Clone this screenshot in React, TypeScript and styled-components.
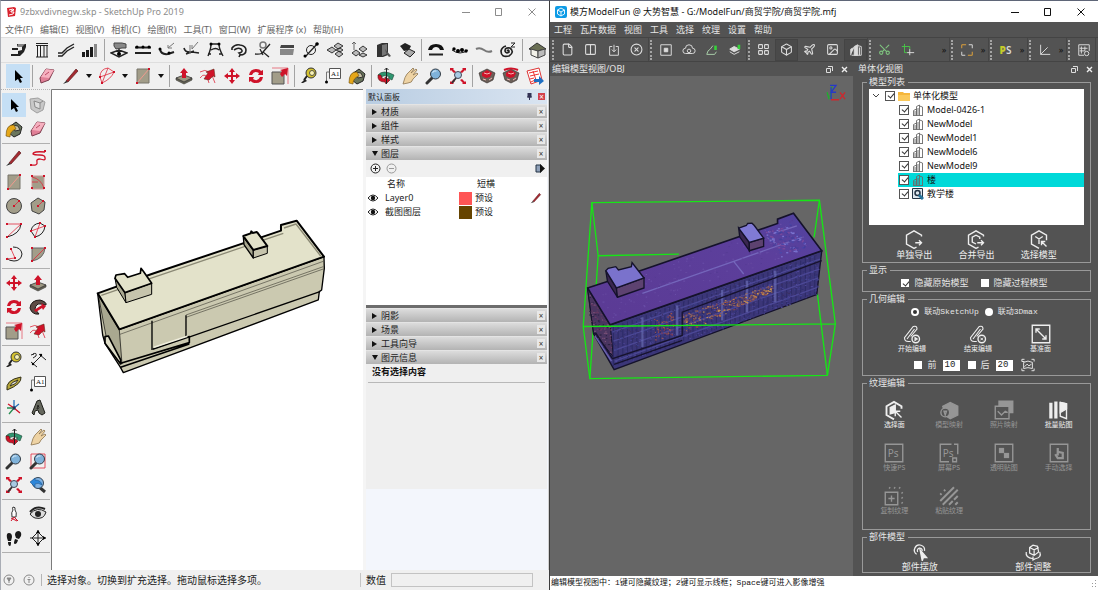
import React from "react";
import styled, { createGlobalStyle, css } from "styled-components";
import { File, Columns2, CircleX, Box, Plane, Image as Picture, Scissors, LayoutGrid } from "lucide-react";

const GlobalStyle = createGlobalStyle`
  * { box-sizing: border-box; }
  body { margin: 0; background: #535353; }
  body, button, input { font-family: "Noto Sans", "Noto Sans CJK SC", sans-serif; font-size: 9px; line-height: 12px; }
  button { border: 0; padding: 0; background: none; color: inherit; }
  svg { display: block; }
`;

/* ---------- shared ---------- */

const Desktop = styled.main`
  display: flex;
  min-height: 100vh;
`;

const Frame = styled.section<{ $dark?: boolean }>`
  flex: 1 1 0;
  min-width: 0;
  display: flex;
  flex-direction: column;
  border-top: 1px solid #5f6678;
  border-left: 1px solid ${(p) => (p.$dark ? "#3c3c3c" : "#a9adb5")};
  background: ${(p) => (p.$dark ? "#535353" : "#f0f0f0")};
  color: ${(p) => (p.$dark ? "#e6e6e6" : "#222")};
`;

const TitleBar = styled.header<{ $active?: boolean }>`
  display: flex;
  align-items: center;
  height: 21px;
  padding: 0 1px 0 5px;
  background: #fff;
  color: ${(p) => (p.$active ? "#111" : "#8c8c8c")};
`;

const Title = styled.h1`
  flex: 1;
  margin: 0 0 0 3px;
  font-size: 9px;
  font-weight: 400;
  line-height: 14px;
  white-space: nowrap;
`;

const WindowButton = styled.button`
  width: 33px;
  height: 20px;
  display: grid;
  place-items: center;
`;

const MenuBar = styled.nav<{ $dark?: boolean }>`
  display: flex;
  gap: ${(p) => (p.$dark ? 8 : 7)}px;
  align-items: center;
  height: 15px;
  padding-left: 4px;
  background: ${(p) => (p.$dark ? "#535353" : "#fff")};
  color: ${(p) => (p.$dark ? "#e6e6e6" : "#666")};
  button { white-space: nowrap; }
`;

function WindowControls() {
  const line = { fill: "none", stroke: "currentColor", strokeWidth: 1 };
  return (
    <>
      <WindowButton aria-label="最小化"><svg width="8" height="8" {...line}><path d="M0 4.5h8" /></svg></WindowButton>
      <WindowButton aria-label="最大化"><svg width="8" height="8" {...line}><path d="M.5 .5h6v7h-6z" /></svg></WindowButton>
      <WindowButton aria-label="关闭"><svg width="8" height="8" {...line}><path d="M.5 .5l7 7M7.5 .5l-7 7" /></svg></WindowButton>
    </>
  );
}

/* ---------- SketchUp icons, drawn on an 18 unit grid ---------- */

const R = "#cf1329";
const T = "#a29d89";
const thin = { fill: "none", stroke: "#222", strokeWidth: 1 };
const redLine = { fill: "none", stroke: "#e0293c", strokeWidth: 0.8 };

const dots = (...points: number[][]) =>
  points.map(([x, y]) => <rect key={`${x}-${y}`} x={x - 1} y={y - 1} width="2" height="2" fill={R} />);

const lens = (
  <>
    <path d="M7 11L2 16" stroke="#333" strokeWidth="3" strokeLinecap="round" />
    <circle cx="10.500" cy="7" r="5" fill="#7fb2da" stroke="#333b44" />
    <path d="M7.500 6q1-3 4-2" stroke="#d8ecfa" fill="none" />
  </>
);
const extents = (
  <>
    <path d="M1 1h4l-1 1 3 3-2 1-3-3-1 1zM17 1h-4l1 1-3 3 2 1 3-3 1 1zM1 17h4l-1-1 2-2-1-2-3 3-1-1zM17 17h-4l1-1-3-3 2-1 3 3 1-1z" fill={R} />
    <circle cx="9" cy="8" r="3.500" fill="#a9cbe4" stroke="#445" />
    <path d="M7 11l-4 5" stroke="#333" strokeWidth="2" />
  </>
);
const gem = (
  <>
    <path d="M1 6l8-4 8 4-2 7-6 3-6-3z" fill="#6b5f58" stroke="#2c2523" strokeWidth=".6" />
    <path d="M4 6l5-3 5 3-2 4-4 1-4-2z" fill={R} />
    <path d="M6 6l3 1 3-1M5 12l3 1M11 13l3-2" stroke="#f5b3b3" fill="none" />
  </>
);

const art: Record<string, React.ReactNode> = {
  cursor: <path d="M6 3v11l3-2 2 4 2-1-2-4h3z" fill="#000" />,
  eraser: <><path d="M2 11L8 2l8 1-5 10-8 3z" fill="#e07f96" stroke="#7c3b4c" /><path d="M8 2l8 1-5 8-8-1z" fill="#f6b0bf" /><path d="M7 8l4-3" stroke="#b94a64" /></>,
  pencil: <><path d="M4 14L14 2l2 2L6 15z" fill="#a52a31" stroke="#5f1c20" strokeWidth=".7" /><path d="M1 17l3-3 2 1z" fill="#222" /></>,
  arc: <><path d="M2 10Q2 2 10 1l6 4Q13 12 4 16z" {...redLine} /><path d="M2 10L16 5M4 16L10 1" {...redLine} />{dots([2, 10], [16, 5], [4, 16])}</>,
  rect: <><path d="M3 2h12v14H3z" fill={T} stroke="#77746a" /><path d="M3 16L15 2" stroke="#f19a8e" />{dots([3, 16], [15, 2])}</>,
  rect2: <><path d="M3 3h12v13H3z" fill={T} stroke="#c99" /><path d="M3 4q9 2 12 11M3 9h6" {...redLine} />{dots([3, 3], [15, 3], [15, 15], [3, 15])}</>,
  push: <><path d="M1 11v2l8 4 8-4v-2l-8 4z" fill="#6b6857" stroke="#333" strokeWidth=".6" /><path d="M1 11l8-3 8 3-8 4z" fill="#9c9782" stroke="#333" strokeWidth=".8" /><path d="M9 1l4 5h-2v5H7V6H5z" fill={R} /></>,
  offset: <><path d="M1 5Q11-1 16 16M1 11q6-8 9 5" {...redLine} /><path d="M5 12l4-6-2-1 8-3 1 8-2-1-4 4z" fill={R} stroke="#521" strokeWidth=".5" /></>,
  move: <path d="M9 1l3 4h-2v3h3V6l4 3-4 3v-2h-3v3h2l-3 4-3-4h2v-3H5v2L1 9l4-3v2h3V5H6z" fill={R} />,
  rotate: <path d="M2 8q1-6 7-6 4 0 5 2l2-1v5h-5l1-2q-5-3-7 2zM16 10q-1 6-7 6-4 0-5-2l-2 1v-5h5l-1 2q5 3 7-2z" fill={R} />,
  scale: <><path d="M1 5h12v12H1z" fill={T} stroke="#555" /><path d="M1 1h16v16" {...redLine} strokeWidth=".6" /><path d="M9 7l2-3-2-1 8-2-1 8-2-2-3 3z" fill={R} /></>,
  tape: <><path d="M1 16l4-4 2 2-4 2z" fill="#222" /><circle cx="11" cy="6" r="5" fill="#d4c230" stroke="#333" /><circle cx="12" cy="6" r="2.500" fill="#f8f2b6" stroke="#554" /><path d="M7 9l-3 4" stroke="#222" strokeWidth="2" /></>,
  label: <><path d="M5.500 1.500h11v10h-11z" fill="#fff" stroke="#555" /><text x="7" y="9" fontSize="7" fontFamily="Liberation Serif, serif" fill="#111">A1</text><path d="M5 5H2.500v10" {...thin} stroke="#777" /><circle cx="2.500" cy="15" r="1.500" /></>,
  paint: <><path d="M4 7l7-5 6 5-2 7-6 3-5-4z" fill="#6a765d" stroke="#222" /><path d="M7 5l6 1 2 4-5 1z" fill="#c9c4a8" stroke="#333" /><path d="M9 5Q1 4 1 16l4 1q0-6 6-8z" fill="#e5a719" stroke="#6b4b0a" strokeWidth=".6" /></>,
  orbit: <><path d="M1 8q5-6 16 0l-2 5-4-2 2-1Q6 7 4 11z" fill="#2f9670" stroke="#1b4232" strokeWidth=".6" /><path d="M1 8q-1 7 7 7l1 2 4-4-5-3v2q-4 0-4-4z" fill={R} stroke="#511" strokeWidth=".6" /><path d="M9.500 1v16M7.500 3l2-2 2 2" {...thin} /></>,
  hand: <path d="M2 17q2-8 4-10l6-6 1 1-3 4 5-4 1 1-4 5 4-2 1 1-5 5q-1 4-5 4z" fill="#eed3a4" stroke="#8d7550" strokeWidth=".8" />,
  zoom: lens,
  extents,
  zoomRed: <><path d="M2 2h14v14H2z" {...redLine} />{lens}</>,
  gem,
  gem2: <>{gem}<path d="M2 3q7-3 14 0" fill="none" stroke={R} strokeWidth="2" /></>,
  redPages: <><path d="M1 4l12-3 3 12-11 4z" fill="#fff" stroke="#d33" /><path d="M3 6l9-2M4 9l9-2M4 12l4-1M5 15l4-2M7 4l3 9" stroke="#e33" /><path d="M8 12h5v-3l5 5-5 4v-3H8z" fill="#1e6fc2" /></>,
  component: <><path d="M1 3l8-1 7 4-2 8-6 3-6-4z" fill="#c8c8c8" stroke="#a0a0a0" /><path d="M5 5l6 2v6l-5-2zM11 7l3-2" fill="#ddd" stroke="#8a8a8a" /></>,
  squiggle: <><path d="M2 16q7 1 6-3-1-3 3-3 6 2 5-1 0-3-5-3-6 0-7-1 0-3 12-2" fill="none" stroke={R} strokeWidth="1.300" />{dots([2, 16], [16, 2])}</>,
  circle: <><circle cx="9" cy="9" r="7.500" fill={T} stroke="#444" /><path d="M9 9l5-5" {...redLine} />{dots([9, 9], [14, 4])}</>,
  polygon: <><path d="M9 1l7 4-1 8-5 4-7-3-1-8z" fill={T} stroke="#444" /><path d="M9 9l5-5" {...redLine} />{dots([9, 9], [14, 4])}</>,
  arc2: <><path d="M16 3q-1 10-14 13" {...thin} /><path d="M2 3h14L2 16" {...redLine} />{dots([2, 3], [16, 3], [2, 16])}</>,
  pie: <><path d="M2 10Q3 3 11 2l5 3q-1 9-10 11z" {...thin} /><path d="M2 10l14-5M6 16l5-14" {...redLine} />{dots([2, 10], [11, 2], [16, 5], [6, 16])}</>,
  arc3: <><path d="M8 2q8 0 9 7-1 7-8 7-5 0-7-3" {...thin} /><path d="M6 4l4 9-8 1" {...redLine} />{dots([6, 4], [10, 13], [2, 14])}</>,
  wedge: <><path d="M3 3h13q-1 11-13 13z" fill={T} stroke="#666" /><path d="M3 16L16 3" {...redLine} />{dots([3, 3], [16, 3], [3, 16])}</>,
  follow: <><path d="M1 10q1-8 10-8 7 2 6 5l-5-1Q7 5 6 11l4 5q-7 1-9-6z" fill="#5d4b45" stroke="#1e1715" /><path d="M5 12l8-5-1-2 5 3-3 4-1-2-6 4z" fill={R} /></>,
  dimension: <><path d="M2 11l6 5M10 3l7 6M4 13l9-9" {...thin} /><path d="M4 3q4-2 3 2l-3 2M2 4l3-1" {...thin} /><circle cx="4" cy="13" r="1.200" /><circle cx="12" cy="4" r="1.200" /></>,
  protractor: <path d="M2 15Q0 5 16 2q1 7-14 13zM5 11q1-4 8-6-1 4-8 6z" fill="#b8a83b" fillRule="evenodd" stroke="#33301a" />,
  axes: <><path d="M9 9V1M9 9l5-4" stroke="#2470b8" strokeWidth="1.300" /><path d="M9 9l6 5M9 9L3 5" stroke={R} strokeWidth="1.300" /><path d="M9 9l-5 6M2 9h5" stroke="#278d52" strokeWidth="1.300" /><circle cx="9" cy="9" r="1.800" fill="#235" /></>,
  text3d: <path d="M3 14L8 2l3-1 5 13-3 2-3-2-1-3-3 1-1 4zM8 10l2-1-1-3z" fill="#66685e" stroke="#1d1e19" fillRule="evenodd" />,
  zoomPrev: <><path d="M9 10l7 6" stroke="#333" strokeWidth="3" /><circle cx="9" cy="7" r="5.500" fill="#7fb2e4" stroke="#345" /><path d="M1 6l5-4v2q6 0 7 5-4-3-7-1v3z" fill="#2d86d9" stroke="#12497f" strokeWidth=".5" /></>,
  camera: <><path d="M8 2q3 0 2 3 2 2 1 7H7Q6 7 8 5 7 3 8 2z" fill="#fff" stroke="#333" /><path d="M6 16l3-4 4 4M6 13l6 3" stroke={R} fill="none" /></>,
  eye: <><path d="M1 9q7-8 16-2-2 8-11 6-3-1-5-4z" fill="#ddd" stroke="#222" /><circle cx="9" cy="9" r="3" fill="#222" /><path d="M1 7q6-7 15-3" {...thin} strokeWidth="2" /></>,
  walk: <path d="M2 9q-1-5 2-5t3 4l-1 4H3zM3 13h3q0 4-1 4-2 0-2-4zM10 6q0-4 4-4 3 1 2 5l-2 3-3-1zM10 10l3 1q-1 4-3 4t0-5z" fill="#1a1a1a" />,
  section: <><path d="M9 1v16M1 9h16M3 9l6-6 6 6-6 6z" {...thin} /><path d="M9 1l2 3H7zM9 17l2-3H7zM17 9l-3 2V7z" /></>,
  // extension toolbar
  stairs: <><path d="M2 13h7v-3l4-1V5H8V3h9v3l-2 5-4 4H2zM3 7h6v2H3z" fill="#222" /><path d="M9 3h7l-3 3H8z" fill="#888" /></>,
  columns: <path d="M3 2.500h12M3 4.500h12M4.500 5v11M7.500 5v11M11 5v11M14 5v11M3 16h12" {...thin} />,
  rails: <path d="M1 12h4l5-5 7-4M1 15h4l5-5 7-4" {...thin} strokeWidth="1.400" />,
  bars: <><path d="M1 11h3v5H1zM5 9h3v7H5zM9 6h3v10H9z" fill="#1b1b1b" /><path d="M13 3h3v13h-3z" fill="#888" /></>,
  stamp: <><path d="M4 2h8l4 1v4h-4l-6 1-2-3z" fill="#888" stroke="#444" /><path d="M9 8v4M1 12l8-3 8 3-8 4z" {...thin} strokeWidth="1.500" /><circle cx="9" cy="13" r="2" /></>,
  beams: <><path d="M1 6.500h16M1 12h16" {...thin} strokeWidth="2" /><circle cx="3" cy="6" r="1.500" /><circle cx="9" cy="6" r="1.500" /><circle cx="15" cy="6" r="1.500" /></>,
  sweep: <><path d="M2 8q1 6 8 5l6-2" {...thin} strokeWidth="2" /><path d="M16 2l-6 5v-3M10 7h4" stroke="#777" fill="none" /><circle cx="2" cy="8" r="1.500" /><circle cx="11" cy="12" r="1.500" /></>,
  sweep2: <><path d="M2 7q1 5 8 4l7 1M4 13l8-3" {...thin} strokeWidth="1.600" /><path d="M16 1l-6 7V4M8 4v9" stroke="#777" fill="none" /></>,
  trapezoid: <><path d="M2 15Q5 8 5 3h8q0 5 4 12M5 9q5-3 8 0M2 13h3M13 13h3" {...thin} strokeWidth="1.400" /><circle cx="5" cy="3" r="1.500" /><circle cx="13" cy="3" r="1.500" /></>,
  hook: <path d="M2 9V7q3-4 8-3 6 1 6 5 0 5-6 5l-1 2M4 9q4-3 7-1 3 3-2 4l2 2" {...thin} strokeWidth="1.600" />,
  knot: <><circle cx="9" cy="4" r="3" fill="none" stroke="#777" strokeWidth="1.500" /><path d="M1 13q7 1 9-3M16 3L9 11l6 5M6 8l3 6" {...thin} strokeWidth="1.300" /></>,
  slab: <><path d="M3 4h13v3H2z" fill="#444" /><path d="M2 8h14l-1 6H2z" fill="#888" /></>,
  pivot: <><path d="M3 16L16 2" {...thin} strokeWidth="1.300" /><circle cx="9" cy="9" r="4.500" {...thin} /><circle cx="15" cy="3" r="1.800" /><circle cx="3" cy="15" r="1.500" /></>,
  tiles: <path d="M1 9l5-3 4 3-4 3zM8 5l4-3 5 3-5 3zM9 13l4-3 4 3-4 3zM10 9l4-2 3 2-3 2z" fill="#bbb" stroke="#222" strokeWidth=".9" />,
  tilesUp: <><path d="M2 12l4-3 4 3-4 3zM9 8l4-3 4 3-4 3zM9 14l4-2 4 2-4 2z" fill="#bbb" stroke="#222" strokeWidth=".9" /><path d="M4 9V1M2 3l2-2 2 2" {...thin} stroke="#666" /></>,
  door: <><path d="M3 4l5-2h6v12l-5 2H3z" fill="#333" /><path d="M8 4l5-1v10l-5 2z" fill="#777" /><path d="M11 8l6 7-2 1-3-4" fill="#555" /></>,
  layers: <><path d="M2 5l5-3 6 3-2 4-5 1z" fill="#222" /><path d="M6 12l5-4 6 3-5 5z" fill="#aaa" stroke="#222" /></>,
  arch: <><path d="M1 9Q2 3 9 3t8 6h-4q-1-3-4-3T5 9z" fill="#111" /><path d="M2 13.500h14" {...thin} strokeWidth="2" /></>,
  beads: <><path d="M1 9q8 6 16 0" {...thin} /><circle cx="3" cy="8" r="1.700" /><circle cx="7" cy="10" r="2" /><circle cx="11" cy="9" r="2" /><circle cx="15" cy="10" r="1.700" /></>,
  wave: <path d="M1 8q4-2 8 1t8 1" fill="none" stroke="#777" strokeWidth="2" />,
  spiral: <><path d="M8 10q2-2 2 1-3 2-4-1 0-4 5-3 5 4-1 8-8 2-8-5 1-4 5-5" {...thin} strokeWidth="1.700" /><path d="M12 2h4l-4 4h4" {...thin} /></>,
  house: <><path d="M1 8l8-6 9 6-9 2z" fill="#6b7055" stroke="#333" /><path d="M3 8v6l7 3v-7z" fill="#f2f1e9" stroke="#444" /><path d="M10 10l7-2v6l-7 3z" fill="#bbb" stroke="#444" /></>,
};

const Art = ({ name }: { name: string }) => (
  <svg width="18" height="18" viewBox="0 0 18 18" aria-hidden="true">{art[name]}</svg>
);

/* ---------- SketchUp window ---------- */

const ToolBar = styled.div<{ $height: number }>`
  display: flex;
  align-items: center;
  height: ${(p) => p.$height}px;
  padding-left: 5px;
  overflow: hidden;
  border-top: 1px solid #dedede;
`;

const ToolButton = styled.button<{ $active?: boolean }>`
  flex: none;
  width: 24px;
  height: 24px;
  display: grid;
  place-items: center;
  background: ${(p) => (p.$active ? "#c5dff5" : "none")};
`;

const DropArrow = styled.button`
  flex: none;
  width: 12px;
  height: 24px;
  display: grid;
  place-items: center;
  &::before { content: ""; border: 3px solid transparent; border-top: 4px solid #111; border-bottom: 0; }
`;

const Divider = styled.span`
  flex: none;
  width: 1px;
  height: 22px;
  margin: 0 2px;
  background: #a3a3a3;
`;

const SketchBody = styled.div`
  flex: 1;
  display: flex;
  min-height: 0;
`;

const Palette = styled.div`
  flex: none;
  width: 51px;
  padding: 3px 1px 0;
  border-top: 1px dotted #b5b5b5;
  border-right: 1px solid #7b7b7b;
`;

const PaletteGroup = styled.div`
  display: grid;
  grid-template-columns: 24px 24px;
  padding-bottom: 2px;
  margin-bottom: 2px;
  border-bottom: 1px solid #b0b0b0;
`;

const Canvas = styled.div`
  flex: 1;
  min-width: 0;
  background: #fff;
  border-top: 1px solid #7b7b7b;
  svg { width: 100%; height: 100%; }
`;

const Tray = styled.aside`
  flex: 0 0 186px;
  display: flex;
  flex-direction: column;
  padding-right: 1px;
  border-left: 3px solid #f5f5f5;
  border-right: 1px solid #d0d0d0;
  background: #f3f6fc;
`;

const TrayTitle = styled.h2`
  display: flex;
  align-items: center;
  gap: 6px;
  height: 15px;
  margin: 0;
  padding: 0 2px;
  background: linear-gradient(90deg, #b9cde2, #d9e4f1);
  font-size: 8px;
  font-weight: 400;
  span { flex: 1; }
`;

const TrayClose = styled.button`
  width: 7px;
  height: 7px;
  background: #d3414c;
  color: #fff;
  font-size: 8px;
  line-height: 7px;
`;

const SectionRow = styled.div`
  display: flex;
  align-items: center;
  height: 14px;
  padding: 0 2px 0 6px;
  background: linear-gradient(#dcdcdc, #b3b3b3);
  border-top: 1px solid #e4e4e4;
`;

const SectionToggle = styled.button<{ $open?: boolean }>`
  flex: 1;
  display: flex;
  align-items: center;
  gap: 3px;
  text-align: left;
  &::before {
    content: "";
    margin-right: ${(p) => (p.$open ? 0 : 1)}px;
    border: 3px solid transparent;
    ${(p) => (p.$open
    ? css`border-top: 5px solid #111; border-bottom: 0;`
    : css`border-left: 5px solid #111; border-right: 0;`)}
  }
`;

const SectionClose = styled.button`
  width: 8px;
  height: 9px;
  background: #e8e8e8;
  color: #333;
  font-size: 8px;
  line-height: 8px;
`;

const LayerActions = styled.div`
  display: flex;
  align-items: center;
  gap: 5px;
  height: 17px;
  padding: 0 1px 0 4px;
  background: #f0f0f0;
  button:last-child { margin-left: auto; }
`;

const LayerPane = styled.div`
  height: 131px;
  background: #fff;
  border-bottom: 3px solid #6d6d6d;
`;

const LayerTable = styled.table`
  width: 100%;
  table-layout: fixed;
  border-collapse: collapse;
  tr { height: 14px; }
  th, td { padding: 0; font-weight: 400; text-align: left; line-height: 12px; white-space: nowrap; }
  th { padding-left: 2px; }
  td:first-child { padding-left: 2px; }
`;

const Swatch = styled.span<{ $color: string }>`
  display: block;
  width: 13px;
  height: 13px;
  background: ${(p) => p.$color};
`;

const EntityInfo = styled.div`
  height: 125px;
  padding: 2px 2px;
  background: #efefef;
  p { margin: 0; padding: 0 4px 4px; border-bottom: 1px solid #b8b8b8; font-weight: 700; color: #111; }
`;

const StatusBar = styled.footer`
  display: flex;
  align-items: center;
  height: 21px;
  padding: 0 2px 0 2px;
  font-size: 10px;
  border-bottom: 1px solid #b9b9b9;
  svg { margin-right: 8px; flex: none; }
  p { flex: 1; margin: 0 0 0 -2px; padding-left: 5px; border-left: 1px solid #b5b5b5; white-space: nowrap; }
  label { display: flex; align-items: center; gap: 5px; padding-left: 5px; border-left: 1px solid #c5c5c5; }
`;

const MeasureInput = styled.input`
  width: 142px;
  height: 14px;
  margin-right: 14px;
  border: 1px solid #c3c3c3;
  background: #f0f0f0;
`;

const extensionTools = [
  ["stairs", "columns", "rails", "bars"],
  ["stamp", "beams", "sweep", "sweep2", "trapezoid", "hook", "knot", "slab", "pivot", "tiles", "tilesUp", "door", "layers"],
  ["arch", "beads", "wave", "spiral"],
  ["house"],
];
const standardTools = [
  ["push", "offset", "move", "rotate", "scale"],
  ["tape", "label", "paint"],
  ["orbit", "hand", "zoom", "extents"],
  ["gem", "gem2", "redPages"],
];
const paletteTools = [
  ["cursor", "component", "paint", "eraser"],
  ["pencil", "squiggle", "rect", "rect2", "circle", "polygon", "arc2", "pie", "arc3", "wedge"],
  ["move", "push", "rotate", "follow", "scale", "offset"],
  ["tape", "dimension", "protractor", "label", "axes", "text3d"],
  ["orbit", "hand", "zoom", "zoomRed", "extents", "zoomPrev"],
  ["camera", "eye", "walk", "section"],
];

const Tools = ({ names }: { names: string[] }) => (
  <>{names.map((n) => <ToolButton key={n} aria-label={n}><Art name={n} /></ToolButton>)}</>
);

const Section = ({ title, open }: { title: string; open?: boolean }) => (
  <SectionRow>
    <SectionToggle $open={open} aria-expanded={!!open}>{title}</SectionToggle>
    <SectionClose aria-label={`关闭${title}`}>×</SectionClose>
  </SectionRow>
);

const EyeMark = () => (
  <svg width="10" height="8" viewBox="0 0 10 8"><path d="M0 4q5-6 10 0-5 6-10 0z" fill="#fff" stroke="#222" /><circle cx="5" cy="4" r="2.200" fill="#111" /></svg>
);

function MassingModel() {
  return (
    <svg viewBox="52 90 311 480" role="img" aria-label="建筑模型">
      <g transform="translate(80 200) scale(.3333)" stroke="#000" strokeLinejoin="round">
        <path d="M53 280L118 388 732 170 733 205 725 270 718 275 715 300 130 518 120 500 75 430 68 405z" fill="#cbc9b0" strokeWidth="4" />
        <path d="M55 285L118 390 126 492 80 418z" fill="#a9a890" strokeWidth="2" />
        <path d="M53 280L215 222 603 92V75L650 62 732 170 118 388z" fill="#e3e2ca" strokeWidth="6" />
        <path d="M64 286L216 234 610 100 M612 84L648 72 722 168" fill="none" stroke="#8b8975" strokeWidth="4" />
        <path d="M120 403L730 184M318 345L730 200M318 352L730 207" fill="none" stroke="#4a493e" strokeWidth="2" />
        <path d="M318 346v68M216 362v88" fill="none" strokeWidth="4" />
        <path d="M325 412L720 275" fill="none" strokeWidth="4" />
        <path d="M122 490L328 428V410L218 448M122 502L328 432" fill="none" strokeWidth="5" />
        <path d="M222 442L322 409" stroke="#efeedd" strokeWidth="5" />
        <path d="M75 410L85 408 122 480V492L75 430z" fill="#deddc8" strokeWidth="5" />
        <path d="M105 235L135 278 138 308 110 262z" fill="#a9a890" strokeWidth="3" />
        <path d="M135 278L215 250V283L138 308z" fill="#c6c4ac" strokeWidth="3" />
        <path d="M105 235L108 225 134 221 143 232 181 220 183 205 190 214 215 250 135 278z" fill="#e3e2ca" strokeWidth="5" />
        <path d="M490 110L520 150V174L492 134z" fill="#a9a890" strokeWidth="4" />
        <path d="M520 150L562 138V160L520 174z" fill="#c6c4ac" strokeWidth="3" />
        <path d="M490 108L512 100 514 94 518 99 530 96 534 100 562 138 520 150z" fill="#e3e2ca" strokeWidth="6" />
      </g>
    </svg>
  );
}

function SketchUpWindow() {
  return (
    <Frame>
      <TitleBar>
        <svg width="11" height="11" viewBox="0 0 11 11"><path d="M1 2l7-1 2 1-1 8-7 1z" fill="#d9232e" /><path d="M3 4l4-1 1 1-3 1v1l3 0-1 2-4 1" stroke="#fff" fill="none" /></svg>
        <Title>9zbxvdivnegw.skp - SketchUp Pro 2019</Title>
        <WindowControls />
      </TitleBar>
      <MenuBar>
        {["文件(F)", "编辑(E)", "视图(V)", "相机(C)", "绘图(R)", "工具(T)", "窗口(W)", "扩展程序 (x)", "帮助(H)"].map((m) => <button key={m}>{m}</button>)}
      </MenuBar>
      <ToolBar $height={25}>
        {extensionTools.map((group, i) => (
          <React.Fragment key={i}>{i > 0 && <Divider />}<Tools names={group} /></React.Fragment>
        ))}
      </ToolBar>
      <ToolBar $height={27}>
        <ToolButton $active aria-label="选择"><Art name="cursor" /></ToolButton>
        <Divider />
        <ToolButton aria-label="擦除"><Art name="eraser" /></ToolButton>
        {["pencil", "arc", "rect"].map((n) => (
          <React.Fragment key={n}><Tools names={[n]} /><DropArrow aria-label={`${n} 更多`} /></React.Fragment>
        ))}
        {standardTools.map((group, i) => (
          <React.Fragment key={i}><Divider /><Tools names={group} /></React.Fragment>
        ))}
      </ToolBar>
      <SketchBody>
        <Palette>
          {paletteTools.map((group, i) => (
            <PaletteGroup key={i}>
              {group.map((n) => <ToolButton key={n} $active={n === "cursor"} aria-label={n}><Art name={n} /></ToolButton>)}
            </PaletteGroup>
          ))}
        </Palette>
        <Canvas><MassingModel /></Canvas>
        <Tray>
          <TrayTitle>
            <span>默认面板</span>
            <svg width="5" height="7"><path d="M1 0h3v4H1zM0 4h5M2.500 4v3" fill="#335" stroke="#335" /></svg>
            <TrayClose aria-label="关闭面板">×</TrayClose>
          </TrayTitle>
          <Section title="材质" />
          <Section title="组件" />
          <Section title="样式" />
          <Section title="图层" open />
          <LayerActions>
            <button aria-label="添加图层"><svg width="11" height="11" {...thin}><circle cx="5.500" cy="5.500" r="4.500" /><path d="M3 5.500h5M5.500 3v5" /></svg></button>
            <button aria-label="删除图层"><svg width="11" height="11" {...thin} stroke="#999"><circle cx="5.500" cy="5.500" r="4.500" /><path d="M3 5.500h5" /></svg></button>
            <button aria-label="详细信息"><svg width="11" height="11"><path d="M1 2h5v7H1z" fill="#8fa0b8" stroke="#234" /><path d="M5 1l5 4.500L5 10z" fill="#111" /></svg></button>
          </LayerActions>
          <LayerPane>
            <LayerTable>
              <colgroup><col width="19" /><col /><col width="16" /><col width="55" /><col width="17" /></colgroup>
              <thead><tr><th /><th>名称</th><th /><th>短横</th><th /></tr></thead>
              <tbody>
                <tr><td><EyeMark /></td><td>Layer0</td><td><Swatch $color="#ff5555" /></td><td>预设</td><td><svg width="12" height="12" viewBox="0 0 18 18">{art.pencil}</svg></td></tr>
                <tr><td><EyeMark /></td><td>截图图层</td><td><Swatch $color="#664400" /></td><td>预设</td><td /></tr>
              </tbody>
            </LayerTable>
          </LayerPane>
          <Section title="阴影" />
          <Section title="场景" />
          <Section title="工具向导" />
          <Section title="图元信息" open />
          <EntityInfo><p>没有选择内容</p></EntityInfo>
        </Tray>
      </SketchBody>
      <StatusBar>
        <svg width="12" height="12" {...thin} stroke="#888"><circle cx="6" cy="6" r="5" /><path d="M6 9V5M4 4h4l-2 3z" fill="#888" /></svg>
        <svg width="12" height="12" {...thin} stroke="#888"><circle cx="6" cy="6" r="5" /><path d="M6 9V5M6 3v1M4.500 5.500h3" /></svg>
        <p>选择对象。切换到扩充选择。拖动鼠标选择多项。</p>
        <label>数值<MeasureInput /></label>
      </StatusBar>
    </Frame>
  );
}

/* ---------- ModelFun window ---------- */

const RibbonBar = styled.div`
  display: flex;
  height: 25px;
  padding: 0 2px 0 1px;
  border-top: 1px solid #444;
  border-bottom: 1px solid #444;
`;

const RibbonGroup = styled.div<{ $grow?: boolean }>`
  display: flex;
  align-items: center;
  flex: ${(p) => (p.$grow ? "1" : "none")};
  border-right: 1px solid #464646;
  &::before {
    content: "";
    height: 20px;
    margin: 0 2px 0 1px;
    border-left: 2px dotted #a5a5a5;
  }
`;

const RibbonButton = styled.button<{ $boxed?: boolean }>`
  width: 23px;
  height: 22px;
  display: grid;
  place-items: center;
  background: ${(p) => (p.$boxed ? "#4a4a4a" : "none")};
  outline: ${(p) => (p.$boxed ? "1px solid #444" : "0")};
  outline-offset: -1px;
  color: #dcdcdc;
`;

const More = styled.button`
  width: 10px;
  margin-left: auto;
  color: #111;
  font-size: 9px;
`;

const PhotoshopMark = styled.span`
  color: #d9d9d9;
  font-size: 10px;
  font-weight: 600;
  b { color: #c5cc2b; }
`;

const FunBody = styled.div`
  flex: 1;
  display: flex;
  min-height: 0;
`;

const Dock = styled.div<{ $side?: boolean }>`
  flex: ${(p) => (p.$side ? "0 0 245px" : "1")};
  min-width: 0;
  display: flex;
  flex-direction: column;
`;

const DockTitle = styled.h2<{ $side?: boolean }>`
  display: flex;
  align-items: center;
  gap: 8px;
  height: 14px;
  margin: 0;
  padding: ${(p) => (p.$side ? "0 5px" : "0 5px 0 2px")};
  font-size: 9px;
  font-weight: 400;
  span { flex: 1; }
`;

const Viewport = styled.div`
  flex: 1;
  background: #666;
  svg { width: 100%; height: 100%; }
`;

const SidePanel = styled.div`
  padding: 0 7px 0 9px;
`;

const Group = styled.fieldset<{ $height: number }>`
  min-width: 0;
  min-height: ${(p) => p.$height}px;
  margin: 0 0 1px;
  padding: 0 6px;
  border: 1px solid #999;
  legend { padding: 0 3px 0 2px; margin-left: -2px; line-height: 12px; }
`;

const Tree = styled.ul`
  height: 136px;
  margin: 1px 0 4px;
  padding: 0;
  list-style: none;
  background: #fff;
  color: #111;
`;

const TreeItem = styled.li<{ $level: number; $selected?: boolean }>`
  height: 14px;
  margin-left: ${(p) => (p.$level ? 29 : 0)}px;
  padding-left: ${(p) => (p.$level ? 1 : 3)}px;
  display: flex;
  align-items: center;
  background: ${(p) => (p.$selected ? "#00d9d9" : "none")};
  label { display: flex; align-items: center; gap: 3px; white-space: nowrap; }
`;

const Tick = styled.input<{ $tree?: boolean }>`
  appearance: none;
  flex: none;
  display: block;
  width: ${(p) => (p.$tree ? 10 : 8)}px;
  height: ${(p) => (p.$tree ? 10 : 8)}px;
  margin: 0;
  background: #fff;
  border: ${(p) => (p.$tree ? "1px solid #555" : "0")};
  &:checked::after {
    content: "";
    display: block;
    width: 3px;
    height: 5px;
    margin: ${(p) => (p.$tree ? "0 0 0 3px" : "1px 0 0 3px")};
    border: solid #333;
    border-width: 0 1px 1px 0;
    transform: rotate(40deg);
  }
`;

const Dot = styled.input`
  appearance: none;
  width: 8px;
  height: 8px;
  margin: 0;
  border-radius: 50%;
  background: #fff;
  &:checked { background: #333; border: 2px solid #fff; }
`;

const Row = styled.div<{ $height: number; $gap: number; $mono?: boolean }>`
  display: flex;
  justify-content: center;
  align-items: center;
  gap: ${(p) => p.$gap}px;
  height: ${(p) => p.$height}px;
  padding-right: 4px;
  label { display: flex; align-items: center; gap: 5px; white-space: nowrap; }
  ${(p) => p.$mono && css`
    font-family: "Liberation Mono", "Noto Sans CJK SC", monospace;
    font-size: 8px;
  `}
`;

const ActionGrid = styled.div<{ $columns: number; $rowHeight: number; $inset: number; $top?: number }>`
  display: grid;
  grid-template-columns: repeat(${(p) => p.$columns}, 1fr);
  grid-auto-rows: ${(p) => p.$rowHeight}px;
  margin: ${(p) => p.$top ?? 0}px ${(p) => p.$inset}px 0;
`;

const Action = styled.button<{ $small?: boolean }>`
  display: flex;
  flex-direction: column;
  align-items: center;
  justify-content: flex-start;
  color: #eee;
  font-size: ${(p) => (p.$small ? 7 : 9)}px;
  line-height: ${(p) => (p.$small ? 9 : 11)}px;
  white-space: nowrap;
  &:disabled { color: #969696; }
`;

const NumberBox = styled.input`
  width: 17px;
  height: 11px;
  margin: 0 4px 0 2px;
  padding: 0 2px;
  border: 0;
  background: #fff;
  color: #222;
  font-family: "Liberation Mono", monospace;
  font-size: 9px;
`;

const Message = styled.footer`
  display: flex;
  align-items: center;
  justify-content: space-between;
  height: 15px;
  padding: 0 1px 0 1px;
  background: #fff;
  color: #111;
  border-bottom: 1px solid #8b8b8b;
  font-family: "Liberation Mono", "Noto Sans CJK SC", monospace;
  font-size: 8px;
`;

const pale: Record<string, React.ReactNode> = {
  importBox: <path d="M6 4H3v10h10V4h-3M8 2v8M5.500 7.500L8 10l2.500-2.500" />,
  stop: <><path d="M2 2h12v12H2z" /><path d="M6 6h4v4H6z" fill="currentColor" /></>,
  cloud: <><path d="M4 12a3 3 0 010-6 4 4 0 018 0 3 3 0 010 6z" /><circle cx="8" cy="9" r="2" /></>,
  treeUp: <><path d="M2 13q1-5 4-6l3-4M2 13h9l2-3" stroke="#a9cfa9" /><path d="M12 8V3" stroke="#36d13a" strokeWidth="3" /></>,
  layersUp: <><path d="M2 7l5-3 6 3-6 3z" fill="currentColor" /><path d="M2 10l5 3 6-3" /><path d="M12.500 7V2" stroke="#36d13a" strokeWidth="3" /></>,
  buildings: <><path d="M6 14V4l4-2v12zM2 14V7l4-2" fill="currentColor" stroke="currentColor" /><path d="M10 3l4 1v10H3M12 5v9" /></>,
  crop: <><path d="M1 4h9v3M4 1v10h3" stroke="#48c348" /><path d="M10 7v7M7 11h8" /></>,
  frame: <><path d="M2 6V2h5M14 10v4H9" stroke="#e2a33a" /><path d="M10 2h4v4M2 10v4h4" /></>,
  axes2: <path d="M3 2v11h11M3 13l8-8" />,
  gridEye: <><path d="M2 2h12v7M2 2v12h6M5 4v8M9 4v5M3 6h9M3 9h6" /><circle cx="11" cy="12" r="2.500" /></>,
  hexOut: <><path d="M14 6V5L8 1.500 2 5v7l6 3.500 2-1" /><path d="M9 11h5M12 9l2 2-2 2" /></>,
  hexMerge: <><path d="M14 6V5L8 1.500 2 5v7l6 3.500 2-1" /><path d="M11 8V6.500L8 5 5 6.500v4L8 12M9 11h5M12 9l2 2-2 2" /></>,
  hexSelect: <><path d="M14 9V5L8 1.500 2 5v7l6 3.500" /><path d="M5 6l3 2 3-2M8 8v4M10 10l4 4M10 13v-3h3" /></>,
  penPlay: <><path d="M7 14H5q-3 0-3-3L9 2q3-1 3 2l-5 6M4 12l6-8" strokeWidth=".9" /><circle cx="11" cy="12" r="3" /><path d="M10.500 11v2l1.500-1z" /></>,
  penStop: <><path d="M7 14H5q-3 0-3-3L9 2q3-1 3 2l-5 6M4 12l6-8" strokeWidth=".9" /><circle cx="11" cy="12" r="3" /><path d="M10 11l2 2M12 11l-2 2" strokeWidth=".8" /></>,
  plane: <><path d="M1 1h14v14H1z" /><path d="M4 4l8 8M4 7V4h3M12 9v3H9" /></>,
  mountain: <path d="M4 4H1V1.500h3M12 1.500h3V4M1 12v2.500h3M12 14.500h3V12M3 5q5-3 10 0v7q-5-2-10 0zM4 10l3-3 2 2 3-2" />,
  face: <><path d="M14 7V5L8 1.500 2 5v7l6 3.500" strokeWidth="1.500" /><path d="M5 6l4-2v6l-4 1z" fill="currentColor" /><path d="M9 9l5 5M9 13V9h4" /></>,
  cubeMap: <><path d="M3 5l6-3 6 3v7l-6 3-3-2z" fill="currentColor" /><circle cx="5" cy="10" r="3.500" fill="#535353" /><path d="M4 9h2l-1 3z" /></>,
  photoMap: <><path d="M4 1h11v9H4z" fill="currentColor" /><path d="M1 5h11v10H1z" fill="#535353" /><path d="M3 9l3 3 3-3 2 1" /></>,
  batch: <><path d="M1 3h1v11H1zM5 2h1v12H5z" fill="currentColor" strokeWidth="1.600" /><path d="M9 2l5 1v12l-5-2z" /><path d="M9 2l5 1v4l-5 3z" fill="currentColor" /></>,
  ps: <path d="M1 1h14v14H1z" />,
  psCrop: <path d="M10 1H1v14h7M12 1h3v8M11 12h3v3h-3z" />,
  checker: <><path d="M1 1h14v14H1z" /><path d="M4 4h4v4H4zM8 8h4v4H8z" fill="currentColor" strokeWidth=".2" /></>,
  touch: <><path d="M1 1h14v14H1z" /><path d="M7 10V4M5 9l2 3h4V8l-4-1" strokeWidth="1.800" /></>,
  copyTex: <><path d="M1 5h10v10H1zM6 7.500v5M3.500 10h5" /><path d="M4 2l1-1M8 2l1-1M12 2l1-1M14 6l1-1M14 10l1-1M14 14l1-1" /></>,
  pasteTex: <path d="M1 7l1-1M4 4l1-1M1 12L12 1M3 15L15 3M8 15l3-3M12 11l3-3M13 15l2-2" strokeWidth="1.600" />,
  place: <><path d="M5 10a4.500 4.500 0 117-3M6 8a2.200 2.200 0 114-1" /><path d="M8 6l6 7h-3l-1 3z" fill="currentColor" /></>,
  adjust: <><path d="M5 4l3-2 4 1 1 5-4 3-4-2zM5 4l4 2 4-2M9 6v5" /><path d="M2 8q-1 5 6 6M14 8q2 5-4 6M8 12v3l2-1" /></>,
};

const Pale = ({ name, size = 14 }: { name: string; size?: number }) => (
  <svg width={size} height={size} viewBox="0 0 16 16" fill="none" stroke="currentColor" strokeWidth="1.100" aria-hidden="true">
    {pale[name]}
    {name.startsWith("ps") && <text x="3" y="11" fontSize="8" fontFamily="Noto Sans, sans-serif" fill="currentColor" stroke="none">Ps</text>}
  </svg>
);

const lucide = { size: 13, strokeWidth: 2 };
const ribbon: { items: [string, React.ReactNode][]; more?: boolean; grow?: boolean }[] = [
  { items: [["新建", <File {...lucide} />], ["打开", <Columns2 {...lucide} />], ["导入", <Pale name="importBox" />], ["关闭", <CircleX {...lucide} />]] },
  { items: [["停止", <Pale name="stop" />], ["云", <Pale name="cloud" />], ["上传", <Pale name="treeUp" />], ["图层", <Pale name="layersUp" />]] },
  { items: [["网格", <LayoutGrid {...lucide} />], ["立方体", <Box {...lucide} />], ["飞行", <Plane {...lucide} />], ["图片", <Picture {...lucide} />], ["单体", <Pale name="buildings" />]] },
  { items: [["剪切", <Scissors {...lucide} color="#7fc47f" style={{ rotate: "-90deg" }} />], ["裁剪", <Pale name="crop" />]], more: true, grow: true },
  { items: [["框选", <Pale name="frame" />]], more: true },
  { items: [["PS", <PhotoshopMark><b>P</b>S</PhotoshopMark>]], more: true },
  { items: [["坐标轴", <Pale name="axes2" />]], more: true },
  { items: [["网格视图", <Pale name="gridEye" />]] },
];

const textureActions: [string, string, boolean][] = [
  ["face", "选择面", true], ["cubeMap", "模型映射", false], ["photoMap", "照片映射", false], ["batch", "批量贴图", true],
  ["ps", "快速PS", false], ["psCrop", "屏幕PS", false], ["checker", "透明贴图", false], ["touch", "手动选择", false],
  ["copyTex", "复制纹理", false], ["pasteTex", "粘贴纹理", false],
];

const models = ["Model-0426-1", "NewModel", "NewModel1", "NewModel6", "NewModel9", "楼", "教学楼"];

const DockHead = ({ title, side }: { title: string; side?: boolean }) => (
  <DockTitle $side={side}>
    <span>{title}</span>
    <button aria-label="浮动"><svg width="7" height="7" fill="none" stroke="#ddd"><path d="M.5 2.500h4v4h-4zM2 .5h4.500V5" /></svg></button>
    <button aria-label="关闭停靠"><svg width="7" height="7" fill="none" stroke="#eee" strokeWidth="1.400"><path d="M1 1l5 5M6 1L1 6" /></svg></button>
  </DockTitle>
);

// Small deterministic generator, so the surface speckle is the same on every render.
function speckle(count: number, seed: number, place: (a: number, b: number) => [number, number], colors: string[], size: number) {
  let s = seed;
  const next = () => (s = (s * 16807) % 2147483647) / 2147483647;
  return Array.from({ length: count }, (_, i) => {
    const [x, y] = place(next(), next());
    return <rect key={i} x={Math.round(x)} y={Math.round(y)} width={size + next() * size} height={size} fill={colors[Math.floor(next() * colors.length)]} />;
  });
}

const onFront = (a: number, b: number): [number, number] => [128 + a * 615, 405 - a * 218 + b * 125];
const onRoof = (a: number, b: number): [number, number] => [75 + a * 590 + b * 50, 300 - a * 215 + b * 85];
const onFarRoof = (a: number, b: number): [number, number] => [575 + a * 80 + b * 60, 120 - a * 28 + b * 78];
const onLights = (a: number, b: number): [number, number] => [335 + a * 270, 370 - a * 88 + b * (60 - a * 40)];
const onLights2 = (a: number, b: number): [number, number] => [250 + a * 60, 380 - a * 16 + b * 70];
const onSide = (a: number, b: number): [number, number] => [55 + a * 65, 310 + a * 105 + b * 95];

function TexturedModel() {
  const bays = Array.from({ length: 44 }, (_, i) => i / 44);
  return (
    <svg viewBox="549 76 304 499" role="img" aria-label="三维模型视图">
      <defs>
        <linearGradient id="roof" x1="0" y1="1" x2="1" y2="0">
          <stop offset="0" stopColor="#5b3a94" />
          <stop offset=".7" stopColor="#5c3f9c" />
          <stop offset="1" stopColor="#4f439f" />
        </linearGradient>
      </defs>
      <g transform="translate(570 190) scale(.3333)">
        <path d="M63 35L82 195 325 190M82 195L57 565M748 28L732 140M742 310L772 555" fill="none" stroke="#16e616" strokeWidth="4" />
        <path d="M50 292L118 403 755 180 740 312 130 538 68 430z" fill="#3b3678" stroke="#15122b" strokeWidth="4" />
        <path d="M50 292L118 403 128 500 68 425z" fill="#4a3560" stroke="#15122b" strokeWidth="3" />
        {speckle(90, 5, onSide, ["#2a2240", "#6a3a62", "#80557a"], 3)}
        <g stroke="#2d2b66" strokeWidth="3">
          {bays.map((b) => <path key={b} d={`M${128 + b * 620} ${408 - b * 218}v${120 - b * 5}`} />)}
        </g>
        <path d="M125 425L750 205M128 452L748 235M130 480L745 262M132 512L742 290" stroke="#4c4896" strokeWidth="4" fill="none" />
        {speckle(800, 11, onFront, ["#302e70", "#454092", "#4e479a", "#3a2f62", "#3a4088"], 3)}
        <path d="M215 380v90M320 345v90M455 298v92M530 270v95M615 240v95" stroke="#6e73bb" strokeWidth="7" opacity=".6" />
        {speckle(300, 23, onLights, ["#b0653c", "#cf9850", "#84484c", "#63467a", "#9c6852"], 3)}
        {speckle(60, 31, onLights2, ["#9c4c4c", "#7a3a58", "#a85e48"], 3)}
        <path d="M50 292L215 238 622 98V85L670 67 755 180 118 403z" fill="url(#roof)" stroke="#15122b" strokeWidth="5" />
        <path d="M215 308L490 212 700 138M490 212L520 250M620 125L680 105M590 140L620 160" stroke="#7466bb" strokeWidth="4" fill="none" />
        {speckle(150, 41, onRoof, ["#6548a0", "#563c94", "#6a4fa8"], 3)}
        {speckle(110, 53, onFarRoof, ["#4a46a8", "#7a74d0", "#463f9c", "#7c4a9c"], 4)}
        <path d="M105 240L137 292 140 320 110 272z" fill="#3a2750" stroke="#15122b" strokeWidth="4" />
        <path d="M137 292L220 262V292L140 320z" fill="#5d4270" stroke="#15122b" strokeWidth="4" />
        <path d="M105 240L112 233 135 228 143 238 182 228 184 216 192 226 220 262 137 292z" fill="#7a72cc" stroke="#15122b" strokeWidth="4" />
        <path d="M505 112L537 155V180L508 138z" fill="#3a2750" stroke="#15122b" strokeWidth="4" />
        <path d="M537 155L580 142V167L537 180z" fill="#5d4270" stroke="#15122b" strokeWidth="4" />
        <path d="M505 112L528 104 532 98 545 97 552 104 580 142 537 155z" fill="#807ad4" stroke="#15122b" strokeWidth="4" />
        <path d="M68 430L75 428 125 505 335 435V365L755 210M130 522L335 450" fill="none" stroke="#17132e" strokeWidth="4" />
        <path d="M72 436L122 512" stroke="#6c64b0" strokeWidth="4" />
        <path d="M63 35L748 28 796 400 772 555 57 565 37 408zM37 408L796 400" fill="none" stroke="#16e616" strokeWidth="4" />
      </g>
      <g fill="none" strokeWidth="1.300">
        <path d="M830 96l2-11M829 98l-2-7" stroke="#1fae2e" />
        <path d="M830 84h6l-5 7h5M831 98V86" stroke="#2738c8" />
        <path d="M831 98.500h8M840 91l5 7M845 91l-5 7" stroke="#d0262c" />
      </g>
    </svg>
  );
}

function ModelFunWindow() {
  return (
    <Frame $dark>
      <TitleBar $active>
        <svg width="12" height="12" viewBox="0 0 12 12"><rect width="12" height="12" rx="2" fill="#0d9be6" /><path d="M2.500 4L6 2l3.500 2v4L6 10 2.500 8zM2.500 4L6 6l3.500-2M6 6v4" stroke="#fff" fill="none" strokeWidth=".9" /></svg>
        <Title>模方ModelFun @ 大势智慧 - G:/ModelFun/商贸学院/商贸学院.mfj</Title>
        <WindowControls />
      </TitleBar>
      <MenuBar $dark>
        {["工程", "瓦片数据", "视图", "工具", "选择", "纹理", "设置", "帮助"].map((m) => <button key={m}>{m}</button>)}
      </MenuBar>
      <RibbonBar>
        {ribbon.map((g, i) => (
          <RibbonGroup key={i} $grow={g.grow}>
            {g.items.map(([label, icon]) => (
              <RibbonButton key={label} aria-label={label} $boxed={label === "立方体" || label === "单体"}>{icon}</RibbonButton>
            ))}
            {g.more && <More aria-label="更多">»</More>}
          </RibbonGroup>
        ))}
      </RibbonBar>
      <FunBody>
        <Dock>
          <DockHead title="编辑模型视图/OBJ" />
          <Viewport><TexturedModel /></Viewport>
        </Dock>
        <Dock $side>
          <DockHead title="单体化视图" side />
          <SidePanel>
            <Group $height={187}>
              <legend>模型列表</legend>
              <Tree>
                <TreeItem $level={0}>
                  <svg width="13" height="8" fill="none" stroke="#444"><path d="M1 2l3 3 3-3" /></svg>
                  <label>
                    <Tick type="checkbox" $tree defaultChecked />
                    <svg width="12" height="10"><path d="M0 1h5l1 1h6v8H0z" fill="#f6b73c" /><path d="M0 4h12v6H0z" fill="#fbc95a" /></svg>
                    单体化模型
                  </label>
                </TreeItem>
                {models.map((m) => (
                  <TreeItem key={m} $level={1} $selected={m === "楼"}>
                    <label>
                      <Tick type="checkbox" $tree defaultChecked />
                      {m === "教学楼"
                        ? <svg width="12" height="12" fill="none" stroke="#234"><path d="M.5 .5h10v10H.5z" fill="#dfe8f0" /><circle cx="5.500" cy="5" r="2.500" strokeWidth="1.500" /><path d="M7 7l4 4" stroke="#28759c" strokeWidth="3" /></svg>
                        : <svg width="12" height="12" fill="none" stroke="#6a6a6a" strokeWidth=".9"><path d="M1.500 11.500v-5l3-1.500v6.500M4.500 11.500v-9l3-1.500v10.500M7.500 2l3 1v8.500M1 11.500h10M6 4v7M3 7v4" /></svg>}
                      {m}
                    </label>
                  </TreeItem>
                ))}
              </Tree>
              <ActionGrid $columns={3} $rowHeight={33} $inset={14}>
                {[["hexOut", "单独导出"], ["hexMerge", "合并导出"], ["hexSelect", "选择模型"]].map(([n, l]) => (
                  <Action key={n}><Pale name={n} size={20} />{l}</Action>
                ))}
              </ActionGrid>
            </Group>
            <Group $height={28}>
              <legend>显示</legend>
              <Row $height={14} $gap={12}>
                <label><Tick type="checkbox" defaultChecked />隐藏原始模型</label>
                <label><Tick type="checkbox" />隐藏过程模型</label>
              </Row>
            </Group>
            <Group $height={83}>
              <legend>几何编辑</legend>
              <Row $height={14} $gap={6} $mono>
                <label><Dot type="radio" name="link" defaultChecked />联动SketchUp</label>
                <label><Dot type="radio" name="link" />联动3Dmax</label>
              </Row>
              <Row $height={38} $gap={38}>
                <Action $small><Pale name="penPlay" size={20} />开始编辑</Action>
                <Action $small><Pale name="penStop" size={20} />结束编辑</Action>
                <Action $small><Pale name="plane" size={20} />基准面</Action>
              </Row>
              <Row $height={16} $gap={4}>
                <label><Tick type="checkbox" />前</label>
                <NumberBox aria-label="前" defaultValue="10" />
                <label><Tick type="checkbox" />后</label>
                <NumberBox aria-label="后" defaultValue="20" />
                <button aria-label="影像"><Pale name="mountain" size={14} /></button>
              </Row>
            </Group>
            <Group $height={150}>
              <legend>纹理编辑</legend>
              <ActionGrid $columns={4} $rowHeight={43} $inset={-2} $top={11}>
                {textureActions.map(([n, l, on]) => (
                  <Action key={n} $small disabled={!on}><Pale name={n} size={20} />{l}</Action>
                ))}
              </ActionGrid>
            </Group>
            <Group $height={38}>
              <legend>部件模型</legend>
              <ActionGrid $columns={2} $rowHeight={29} $inset={-6}>
                <Action><Pale name="place" size={18} />部件摆放</Action>
                <Action><Pale name="adjust" size={18} />部件调整</Action>
              </ActionGrid>
            </Group>
          </SidePanel>
        </Dock>
      </FunBody>
      <Message>
        <span>编辑模型视图中：1键可隐藏纹理；2键可显示线框；Space键可进入影像增强</span>
        <svg width="7" height="7" fill="#999"><path d="M5 0h1v1H5zM5 3h1v1H5zM2 3h1v1H2zM5 6h1v1H5zM2 6h1v1H2z" /></svg>
      </Message>
    </Frame>
  );
}

export default function App() {
  return (
    <Desktop>
      <GlobalStyle />
      <SketchUpWindow />
      <ModelFunWindow />
    </Desktop>
  );
}
